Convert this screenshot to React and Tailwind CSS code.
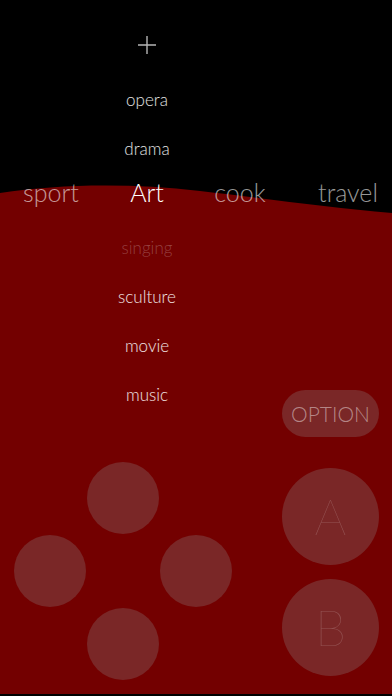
import React from "react";

const font = { fontFamily: "Lato, 'Open Sans', 'Liberation Sans', sans-serif" };

function Row({ children, className = "" }) {
  return (
    <div className={"h-[49px] flex items-center justify-center " + className}>{children}</div>
  );
}

function Circle({ className = "" }) {
  return <div className={"w-[72px] h-[72px] rounded-full bg-[#7a2727] " + className} />;
}

export default function App() {
  return (
    <div
      className="relative w-[392px] h-[696px] bg-black overflow-hidden font-light"
      style={font}
    >
      <svg className="absolute inset-0" width="392" height="696" viewBox="0 0 392 696">
        <path
          d="M0 193 C 60 184 130 183 200 191 C 270 199 330 208 392 213 L392 694 L0 694 Z"
          fill="#730000"
        />
      </svg>

      <div className="relative flex flex-col">
        {/* plus */}
        <div className="w-[294px] pt-[36px] h-[76px] flex justify-center">
          <svg width="18" height="18" viewBox="0 0 18 18">
            <path d="M9 0 V18 M0 9 H18" stroke="#b5b5b5" strokeWidth="1.4" />
          </svg>
        </div>

        <div className="w-[294px] flex flex-col text-[17px] text-white/90 -mt-[1px]">
          <Row>opera</Row>
          <Row>drama</Row>
        </div>

        {/* categories */}
        <div className="h-[40px] -mt-[1px] flex items-center text-[25px] leading-none">
          <div className="w-[102px] text-center text-white/60">sport</div>
          <div className="w-[90px] text-center text-white">Art</div>
          <div className="w-[96px] text-center text-white/60">cook</div>
          <div className="w-[88px] ml-[16px] text-center text-white/60">travel</div>
        </div>

        {/* body */}
        <div className="flex mt-[11px]">
          <div className="flex-1 flex flex-col">
            <div className="pl-[12px] flex flex-col text-[17px] text-white/90">
              <Row className="text-white/25">singing</Row>
              <Row>sculture</Row>
              <Row>movie</Row>
              <Row>music</Row>
            </div>
            <div className="mt-[42px] ml-[13px] grid grid-cols-[73px_73px_73px] grid-rows-[73px_73px_73px] w-[219px] place-items-center">
              <div />
              <Circle />
              <div />
              <Circle />
              <div />
              <Circle />
              <div />
              <Circle />
              <div />
            </div>
          </div>

          <div className="w-[97px] mr-[13px] flex flex-col">
            <div className="mt-[167px] h-[47px] rounded-full bg-[#7a2727] flex items-center justify-center text-[21px] text-white/45">
              OPTION
            </div>
            <div className="mt-[31px] w-[97px] h-[97px] rounded-full bg-[#7a2727] flex items-center justify-center text-[50px] font-thin text-white/20">
              A
            </div>
            <div className="mt-[14px] w-[97px] h-[97px] rounded-full bg-[#7a2727] flex items-center justify-center text-[50px] font-thin text-white/20">
              B
            </div>
          </div>
        </div>
      </div>
    </div>
  );
}
